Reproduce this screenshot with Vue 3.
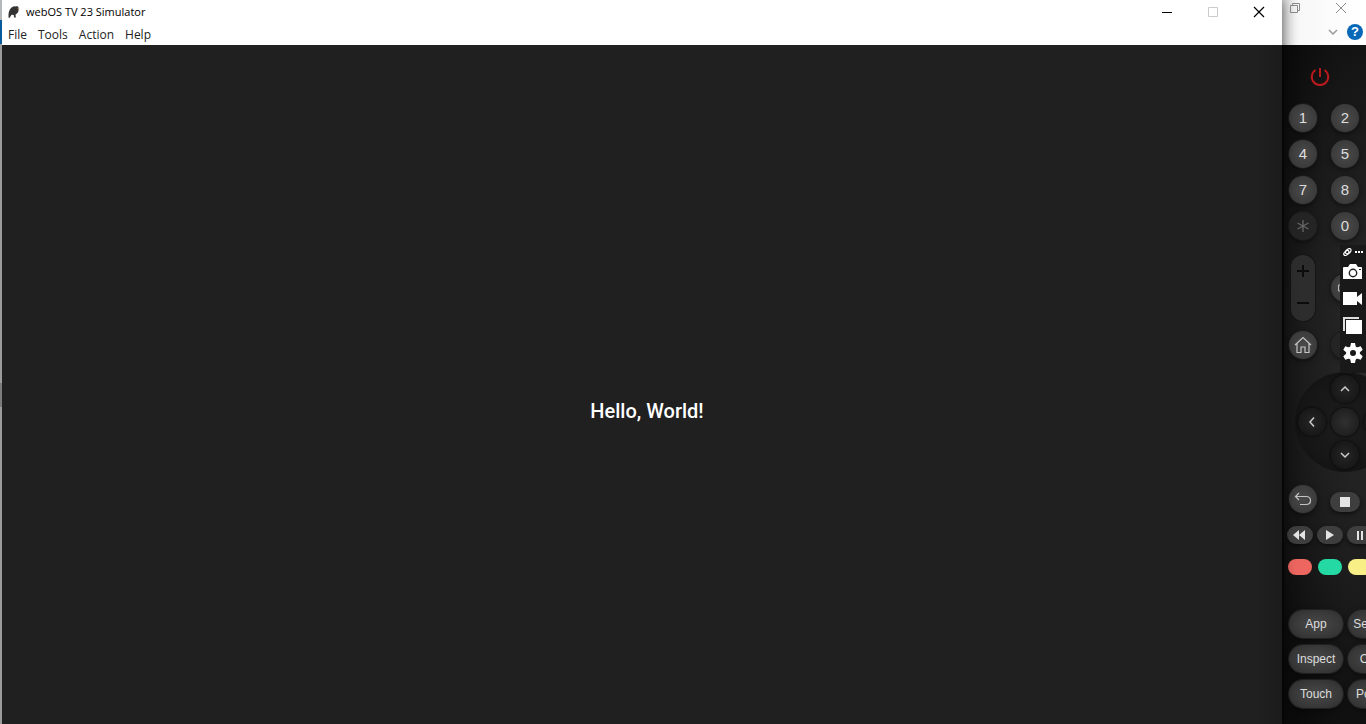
<script setup>
const menus = ['File', 'Tools', 'Action', 'Help']
const digits = ['1', '2', '4', '5', '7', '8', '*', '0']
const actions = ['App', 'Settings', 'Inspect', 'Close', 'Touch', 'Pointer']
</script>

<template>
  <div class="desktop">
    <div class="edge"></div>
    <section class="simulator">
      <header class="chrome">
        <div class="titlebar">
          <svg class="logo" width="12" height="14" viewBox="0 0 12 14">
            <path d="M3 3Q5 .8 8 1.500L9 1Q11 1.500 10.500 3.500Q11 8 7.500 9.500L7.800 12.500H6L5.800 10L3.500 9.800L1.500 13L.5 12.500Q0 6 3 3Z" fill="#333" />
            <path d="M9.500 3L11.500 3.500L10 4.500Z" fill="#b48b55" />
          </svg>
          <h1>webOS TV 23 Simulator</h1>
          <div class="controls">
            <button aria-label="Minimize"><svg width="12" height="12"><path d="M1 6.500H11" stroke="#000" /></svg></button>
            <button aria-label="Maximize" disabled><svg width="12" height="12"><path d="M1.500 1.500H10.500V10.500H1.500Z" fill="none" stroke="#ccc" /></svg></button>
            <button aria-label="Close"><svg width="12" height="12"><path d="M1 1L11 11M11 1L1 11" stroke="#000" stroke-width="1.200" /></svg></button>
          </div>
        </div>
        <nav class="menubar">
          <button v-for="m in menus" :key="m">{{ m }}</button>
        </nav>
      </header>
      <main class="screen"><p>Hello, World!</p></main>
    </section>

    <aside class="side">
      <div class="back-window">
        <div class="back-row">
          <button aria-label="Restore"><svg width="12" height="12" fill="none" stroke="#8a8a8a"><path d="M1.500 3.500H8.500V10.500H1.500ZM3.500 3V1.500H10.500V8.500H9" /></svg></button>
          <button aria-label="Close background window"><svg width="12" height="12"><path d="M1 1L11 11M11 1L1 11" stroke="#8a8a8a" /></svg></button>
        </div>
        <div class="back-row ribbon">
          <button aria-label="Expand"><svg width="10" height="8" fill="none" stroke="#999" stroke-width="1.500"><path d="M1 2L5 6L9 2" /></svg></button>
          <button class="help" aria-label="Help">?</button>
        </div>
      </div>

      <div class="remote">
        <button class="power" aria-label="Power">
          <svg width="20" height="20" viewBox="0 0 20 20" fill="none" stroke="#b5191b" stroke-width="2"><path d="M10 1V10M5.500 3A8.200 8.200 0 1 0 14.500 3" /></svg>
        </button>

        <div class="digits">
          <button v-for="d in digits" :key="d" class="round" :class="{ dim: d === '*' }" :aria-label="d">
            <svg v-if="d === '*'" width="14" height="14" stroke="#666" stroke-width="1.300"><path d="M7 1V13M1.500 4L12.500 10M12.500 4L1.500 10" /></svg>
            <template v-else>{{ d }}</template>
          </button>
        </div>

        <div class="pair volume-row">
          <div class="volume">
            <button aria-label="Volume up"><svg width="14" height="14" stroke="#0c0c0c" stroke-width="2"><path d="M7 1V13M1 7H13" /></svg></button>
            <button aria-label="Volume down"><svg width="14" height="14" stroke="#0c0c0c" stroke-width="2"><path d="M1 7H13" /></svg></button>
          </div>
          <button class="round" aria-label="Mute"><svg width="16" height="12" fill="none" stroke="#bbb"><path d="M4 3H1.500V9H4L9 11V1Z" /></svg></button>
        </div>

        <div class="pair home-row">
          <button class="round" aria-label="Home"><svg width="18" height="18" viewBox="0 0 18 18" fill="none" stroke="#c4c4c4" stroke-width="1.200"><path d="M1 9L9 1.500L17 9M3 7.500V16.500H7V11H11V16.500H15V7.500" /></svg></button>
          <button class="round dim" aria-label="Guide"></button>
        </div>

        <div class="dpad">
          <button class="up" aria-label="Up"><svg width="10" height="8"><path d="M1 6L5 2L9 6" /></svg></button>
          <button class="left" aria-label="Left"><svg width="8" height="12"><path d="M6 1.500L2 6L6 10.500" /></svg></button>
          <button class="ok" aria-label="OK"></button>
          <button class="right" aria-label="Right"><svg width="8" height="12"><path d="M2 1.500L6 6L2 10.500" /></svg></button>
          <button class="down" aria-label="Down"><svg width="10" height="8"><path d="M1 2L5 6L9 2" /></svg></button>
        </div>

        <div class="pair back-key">
          <button class="round" aria-label="Back"><svg width="18" height="16" viewBox="0 0 18 16" fill="none" stroke="#c4c4c4" stroke-width="1.200"><path d="M5 2L1.500 5.500L5 9M1.500 5.500H12Q16.500 5.500 16.500 9.500T12 13.500H6" /></svg></button>
          <button class="stop" aria-label="Stop"><svg width="10" height="10"><path d="M0 0H10V10H0Z" fill="#e4e4e4" /></svg></button>
        </div>

        <div class="strip media">
          <button aria-label="Rewind"><svg width="14" height="10"><path d="M6 0V10L0 5ZM12 0V10L6 5Z" fill="#e4e4e4" /></svg></button>
          <button aria-label="Play"><svg width="10" height="10"><path d="M1 0V10L9 5Z" fill="#e4e4e4" /></svg></button>
          <button aria-label="Pause"><svg width="8" height="10"><path d="M1 1H3V10H1ZM5 1H7V10H5Z" fill="#e4e4e4" /></svg></button>
        </div>

        <div class="strip colors">
          <button class="red" aria-label="Red"></button>
          <button class="green" aria-label="Green"></button>
          <button class="yellow" aria-label="Yellow"></button>
        </div>

        <div class="actions">
          <button v-for="a in actions" :key="a">{{ a }}</button>
        </div>
      </div>

      <div class="capture">
        <div class="grip">
          <svg width="9" height="8" viewBox="0 0 9 8" fill="none" stroke="#fff" stroke-width="1.200"><ellipse cx="5.300" cy="3.300" rx="3.200" ry="2" transform="rotate(-42 5.300 3.300)" /><ellipse cx="3.400" cy="5" rx="3" ry="1.900" transform="rotate(-42 3.400 5)" /></svg>
          <svg width="8" height="8" fill="#fff"><path d="M0 3H2V5H0ZM3 3H5V5H3ZM6 3H8V5H6Z" /></svg>
        </div>
        <button aria-label="Take screenshot">
          <svg width="20" height="16" viewBox="0 0 20 16"><path d="M1 3H5L7 0H13L15 3H18Q19 3 19 4V15H0V4Q0 3 1 3Z" fill="#fff" /><circle cx="10" cy="9" r="3.700" fill="none" stroke="#222" stroke-width="1.400" /><path d="M16 5H18V6H16Z" fill="#222" /></svg>
        </button>
        <button aria-label="Record video">
          <svg width="20" height="14"><path d="M0 0H14V5L19 1V13L14 9V13H0Z" fill="#fff" /></svg>
        </button>
        <button aria-label="Gallery">
          <svg width="20" height="18"><path d="M0 0H16V2H2V14H0Z" fill="#ddd" /><path d="M3 3H19V17H3Z" fill="#fff" /></svg>
        </button>
        <button aria-label="Capture settings">
          <svg width="20" height="20" viewBox="0 0 20 20"><circle cx="10" cy="10" r="5" fill="none" stroke="#fff" stroke-width="4" /><path d="M8 0H12L12.800 4H7.200ZM8 20H12L12.800 16H7.200ZM.3 6.700L2.300 3.300L6.200 4.600L3.400 9.400ZM19.700 13.300L17.700 16.700L13.800 15.400L16.600 10.600ZM.3 13.300L2.300 16.700L6.200 15.400L3.400 10.600ZM19.700 6.700L17.700 3.300L13.800 4.600L16.600 9.400Z" fill="#fff" /></svg>
        </button>
      </div>
    </aside>
  </div>
</template>

<style>
body { margin: 0; overflow: hidden; }
</style>

<style scoped>
.desktop { display: flex; height: 100vh; overflow: hidden; background: #202020; }
button { display: flex; align-items: center; justify-content: center; flex: none; margin: 0; padding: 0; border: 0; background: none; color: inherit; font: inherit; }
svg { display: block; flex: none; }
h1, p { margin: 0; }

.edge { position: relative; z-index: 2; flex: none; width: 2px; background: linear-gradient(#b4b8ba 0 20px, #075a9b 20px 44px, #9c9c9c 44px 383px, #7c7c7c 383px 407px, #9c9c9c 407px); }
.simulator { position: relative; z-index: 1; display: flex; flex: 1; flex-direction: column; min-width: 0; box-shadow: 0 0 12px #0009; }
.chrome { height: 45px; background: #fff; color: #111; font: 12px/20px "Open Sans", "Noto Sans", sans-serif; }
.titlebar { display: flex; align-items: center; height: 24px; padding-left: 6px; }
.titlebar h1 { flex: 1; margin-left: 6px; font-size: 11px; font-weight: 400; color: #000; }
.controls { display: flex; }
.controls button { width: 46px; height: 24px; }
.menubar { display: flex; gap: 11px; height: 21px; padding-left: 6px; color: #222; }
.menubar button { height: 22px; }
.screen { display: flex; flex: 1; align-items: center; justify-content: center; padding: 52px 0 0 10px; background: linear-gradient(90deg, #202020 98%, #1b1b1b); color: #fff; font: 500 20px/24px Roboto, sans-serif; }

.side { position: relative; display: flex; flex: none; flex-direction: column; width: 82px; padding-left: 2px; overflow: hidden; background: #090909; }
.back-window { height: 45px; margin-left: -2px; background: linear-gradient(90deg, #d8d8d8, #f8f8f8 20%, #fff); }
.back-row { display: flex; justify-content: space-between; padding: 2px 19px 0 7px; }
.ribbon { align-items: center; justify-content: flex-end; gap: 9px; padding: 10px 3px 0; }
.help { width: 16px; height: 16px; border-radius: 50%; background: #0868b8; color: #fff; font: 700 13px/16px "Liberation Sans", sans-serif; }

.remote { flex: 1; width: 126px; overflow: hidden; padding: 22px 0 0 5px; background: radial-gradient(ellipse 110px 420px at 80px 320px, #2a2a2a, #1d1d1d 50%, #0b0b0b 100%); color: #ddd; font: 15px/20px "Liberation Sans", Arial, sans-serif; }
.power { width: 20px; height: 20px; margin-left: 21px; }
.digits { display: grid; grid-template-columns: 28px 28px; gap: 8px 14px; margin-top: 17px; }
.round { width: 28px; height: 28px; border-radius: 50%; background: radial-gradient(circle, #4a4a4a, #3b3b3b 70%, #303030); box-shadow: 0 0 0 1px #1b1b1b, 0 2px 5px #0008; }
.dim { background: #242424; }
.pair { display: flex; align-items: center; gap: 14px; }
.volume-row { margin-top: 15px; }
.volume { display: flex; flex: none; flex-direction: column; align-items: center; justify-content: space-between; box-sizing: border-box; width: 24px; height: 66px; margin: 0 2px; padding: 9px 0 11px; border-radius: 12px; background: #2d2d2d; box-shadow: 0 0 0 1px #151515; }
.home-row { margin-top: 10px; }
.dpad { display: grid; grid-template: 32px 32px 32px / 32px 32px 32px; gap: 1px; align-content: center; justify-content: center; width: 100px; height: 100px; margin: 13px 0 0 6px; border-radius: 50%; background: radial-gradient(circle, #1d1d1d, #161616 60%, #0e0e0e); }
.dpad button { width: 28px; height: 28px; place-self: center; border-radius: 50%; background: radial-gradient(circle, #252525, #161616 80%); box-shadow: 0 0 3px #000; }
.dpad path { fill: none; stroke: #ccc; stroke-width: 1.5; }
.up { grid-area: 1 / 2; }
.left { grid-area: 2 / 1; }
.dpad .ok { grid-area: 2 / 2; background: radial-gradient(circle, #303030, #1d1d1d 80%); }
.right { grid-area: 2 / 3; }
.down { grid-area: 3 / 2; }
.back-key { align-items: center; margin-top: 13px; }
.stop { width: 30px; height: 20px; margin: 6px 0 0 -1px; border-radius: 10px; background: #3e3e3e; box-shadow: 0 2px 4px #0008; }
.strip { display: flex; margin-left: -2px; }
.media { gap: 4px; margin-top: 13px; }
.media button { width: 26px; height: 18px; border-radius: 9px; background: #3e3e3e; box-shadow: 0 2px 4px #0008; }
.colors { gap: 6px; margin: 15px 0 0 -1px; }
.colors button { width: 24px; height: 16px; border-radius: 8px; }
.red { background: #ed6660; }
.green { background: #25d9a4; }
.yellow { background: #f8f087; }
.actions { display: grid; grid-template-columns: 54px 54px; gap: 7px 5px; margin-top: 35px; font-size: 12px; }
.actions button { height: 28px; border-radius: 14px; background: radial-gradient(ellipse, #484848, #393939 60%, #2c2c2c); box-shadow: 0 0 0 1px #202020, 0 2px 5px #0008; }

.capture { position: absolute; top: 245px; right: 0; display: flex; flex-direction: column; align-items: flex-end; gap: 10px; box-sizing: border-box; width: 26px; height: 128px; padding: 3px 3px 0 0; background: #191919; }
.capture button { width: 20px; height: 17px; }
.grip { display: flex; gap: 3px; margin-bottom: -3px; }
</style>
